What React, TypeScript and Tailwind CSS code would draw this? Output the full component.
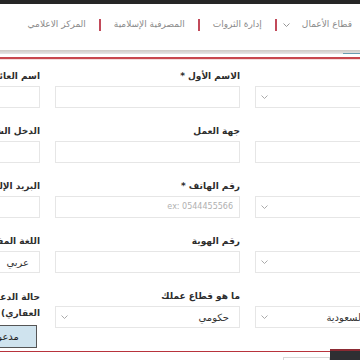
import React from "react";

const font = { fontFamily: '"DejaVu Sans", "Noto Sans", sans-serif' };

const Chevron = ({ color = "#a0a0a0" }: { color?: string }) => (
  <svg width="7" height="4" viewBox="0 0 7 4" className="shrink-0">
    <path d="M0.5 0.5L3.5 3.5L6.5 0.5" fill="none" stroke={color} strokeWidth="0.9" />
  </svg>
);

type FieldProps = {
  label?: React.ReactNode;
  select?: boolean;
  value?: string;
  placeholder?: string;
};

const Field = ({ label, select, value, placeholder }: FieldProps) => (
  <div className="flex flex-col">
    <div className="h-[14px] text-[9px] font-bold leading-[14px] text-[#2d2d2d] text-right whitespace-nowrap">
      {label}
    </div>
    <div
      className={
        "mt-[3px] h-[22px] border border-[#e6e6e6] bg-white flex items-center justify-between pl-[5px] " +
        (placeholder ? "pr-[6px]" : "pr-[10px]")
      }
    >
      {placeholder ? (
        <span dir="ltr" className="text-[8px] text-[#b0b0b0] whitespace-nowrap">
          {placeholder}
        </span>
      ) : (
        <span className="text-[10px] text-[#333] whitespace-nowrap">{value}</span>
      )}
      {select ? <Chevron /> : <span />}
    </div>
  </div>
);

export default function App() {
  return (
    <div className="w-[360px] h-[360px] overflow-hidden bg-white relative" style={font}>
      <div className="h-[4px] bg-[#262626]" />
      <nav dir="rtl" className="h-[42px] flex items-center pr-[8px] text-[9px] text-[#8a8a8a]">
        <span className="whitespace-nowrap">قطاع الأعمال</span>
        <span className="mr-[12px]">
          <Chevron color="#8a8a8a" />
        </span>
        <span className="mr-[6px] w-[2px] h-[12px] bg-[#c24a5a]" />
        <span className="mr-[13px] whitespace-nowrap">إدارة الثروات</span>
        <span className="mr-[13px] w-[2px] h-[12px] bg-[#c24a5a]" />
        <span className="mr-[13px] whitespace-nowrap">المصرفية الإسلامية</span>
        <span className="mr-[13px] w-[2px] h-[12px] bg-[#c24a5a]" />
        <span className="mr-[13px] whitespace-nowrap">المركز الاعلامي</span>
      </nav>
      <div className="h-[4px]" />
      <div className="h-[4px] bg-gradient-to-b from-[#cdc8c3] to-[#e6e6e6] flex justify-end items-end">
        <div className="w-[17px] h-[1px] bg-[#6a9bb0]" />
      </div>
      <div className="h-[3px]" />
      <div className="h-[2px] bg-[#c8474d]" />
      <div className="h-[1px] bg-[#f4dcdc]" />

      <div className="pt-[9px]">
        <div
          dir="rtl"
          className="ml-[-145px] w-[585px] grid grid-cols-[185px_185px_185px] gap-x-[15px] gap-y-[16px] items-start"
        >
          {/* Row 1 */}
          <Field select />
          <Field label="الاسم الأول *" />
          <Field label="اسم العائلة" />
          {/* Row 2 */}
          <Field />
          <Field label="جهة العمل" />
          <Field label="الدخل الشهري" />
          {/* Row 3 */}
          <Field select />
          <Field label="رقم الهاتف *" placeholder="ex: 0544455566" />
          <Field label="البريد الإلكتروني" />
          {/* Row 4 */}
          <Field select />
          <Field label="رقم الهوية" />
          <Field label="اللغة المفضلة" select value="عربي" />
          {/* Row 5 */}
          <Field select value="المملكة العربية السعودية" />
          <Field label="ما هو قطاع عملك" select value="حكومي" />
          <div className="flex flex-col">
            <div className="text-[9px] font-bold leading-[16px] text-[#2d2d2d] text-right whitespace-nowrap">
              حالة الدعم (السكني أو العقاري
              <br />
              العقاري)
            </div>
            <div className="mt-[4px] flex gap-[6px] mr-[3px]">
              <div className="w-[64px] h-[23px] border border-[#555] bg-[#cfe3ee] flex items-center justify-center text-[10px] text-[#222]">
                مدعوم
              </div>
              <div className="w-[64px] h-[23px] border border-[#ccc] bg-white flex items-center justify-center text-[10px] text-[#222]">
                غير مدعوم
              </div>
            </div>
          </div>
        </div>
        <div className="mt-[3px] h-[1px] bg-[#b8333c]" />
      </div>

      <div className="absolute left-[330px] top-[349px] w-[30px] h-[11px] bg-[#2f2f33] border-t-2 border-[#8b2a33]" />
      <div className="absolute left-[283px] top-[357px] w-[47px] h-[6px] border border-[#d8d8d8] bg-white" />
    </div>
  );
}
